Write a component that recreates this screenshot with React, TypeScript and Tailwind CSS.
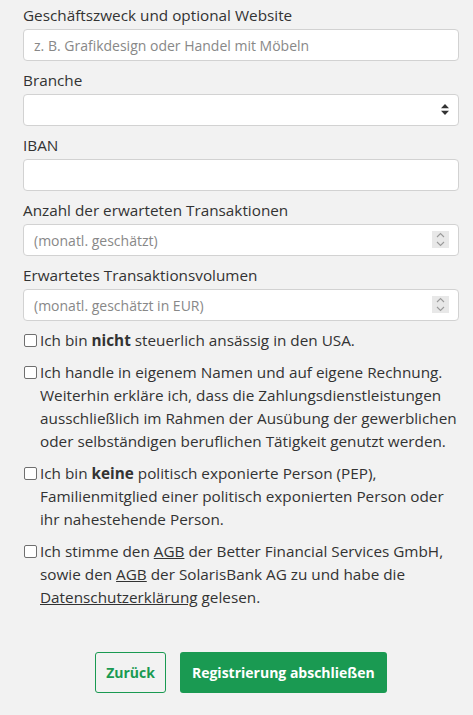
import { ReactNode } from 'react';

const labelCls = "block text-[15.3px] leading-[22px] text-[#333] mb-[3px]";
const inputCls =
  "w-full h-[32px] rounded-[4px] border border-[#d2d2d2] bg-white px-[10px] text-[14px] text-[#333] placeholder:text-[#888] outline-none";

function SortIcon() {
  return (
    <svg width="8" height="11" viewBox="0 0 8 11" className="absolute right-[10px] top-[10px]">
      <path d="M4 0 L8 4.3 H0 Z" fill="#333" />
      <path d="M4 11 L8 6.7 H0 Z" fill="#333" />
    </svg>
  );
}

function Spinner() {
  return (
    <div className="absolute right-[10px] top-[7px] flex h-[17px] w-[17px] flex-col items-center justify-center bg-[#e8e8e8]">
      <svg width="9" height="15" viewBox="0 0 9 15">
        <path d="M1 5 L4.5 1.5 L8 5" fill="none" stroke="#9a9a9a" strokeWidth="1.1" />
        <path d="M1 10 L4.5 13.5 L8 10" fill="none" stroke="#9a9a9a" strokeWidth="1.1" />
      </svg>
    </div>
  );
}

function Field({ label, children, first }: { label: string; children: ReactNode; first?: boolean }) {
  return (
    <div className={first ? "" : "mt-[8px]"}>
      <label className={labelCls}>{label}</label>
      <div className="relative">{children}</div>
    </div>
  );
}

function Check({ children }: { children: ReactNode }) {
  return (
    <label className="mt-[9px] flex items-start text-[15.3px] leading-[23px] text-[#333]">
      <span className="mt-[5px] mr-[3px] ml-[1px] h-[13px] w-[13px] shrink-0 rounded-[2px] border border-[#6f6f6f] bg-white" />
      <span>{children}</span>
    </label>
  );
}

export default function App() {
  return (
    <div className="min-h-screen bg-[#f2f2f2] pl-[23px] pr-[14px] pt-[4px] pb-[22px] font-['Open_Sans',sans-serif]">
      <Field label="Geschäftszweck und optional Website" first>
        <input className={inputCls} placeholder="z. B. Grafikdesign oder Handel mit Möbeln" />
      </Field>
      <Field label="Branche">
        <div className={inputCls} />
        <SortIcon />
      </Field>
      <Field label="IBAN">
        <input className={inputCls} />
      </Field>
      <Field label="Anzahl der erwarteten Transaktionen">
        <input className={inputCls} placeholder="(monatl. geschätzt)" />
        <Spinner />
      </Field>
      <Field label="Erwartetes Transaktionsvolumen">
        <input className={inputCls} placeholder="(monatl. geschätzt in EUR)" />
        <Spinner />
      </Field>

      <div className="mt-[-1px]">
        <Check>
          Ich bin <b className="font-bold">nicht</b> steuerlich ansässig in den USA.
        </Check>
        <Check>
          Ich handle in eigenem Namen und auf eigene Rechnung.
          <br />
          Weiterhin erkläre ich, dass die Zahlungsdienstleistungen
          <br />
          ausschließlich im Rahmen der Ausübung der gewerblichen
          <br />
          oder selbständigen beruflichen Tätigkeit genutzt werden.
        </Check>
        <Check>
          Ich bin <b className="font-bold">keine</b> politisch exponierte Person (PEP),
          <br />
          Familienmitglied einer politisch exponierten Person oder
          <br />
          ihr nahestehende Person.
        </Check>
        <Check>
          Ich stimme den <span className="underline">AGB</span> der Better Financial Services GmbH,
          <br />
          sowie den <span className="underline">AGB</span> der SolarisBank AG zu und habe die
          <br />
          <span className="underline">Datenschutzerklärung</span> gelesen.
        </Check>
      </div>

      <div className="mt-[43px] flex justify-center gap-[14px]">
        <button className="h-[41px] rounded-[3px] border border-[#1a9a52] px-[10px] text-[14px] font-bold text-[#1a9a52]">
          Zurück
        </button>
        <button className="h-[41px] rounded-[3px] bg-[#1a9a52] px-[12px] text-[14px] font-bold text-white">
          Registrierung abschließen
        </button>
      </div>
    </div>
  );
}
